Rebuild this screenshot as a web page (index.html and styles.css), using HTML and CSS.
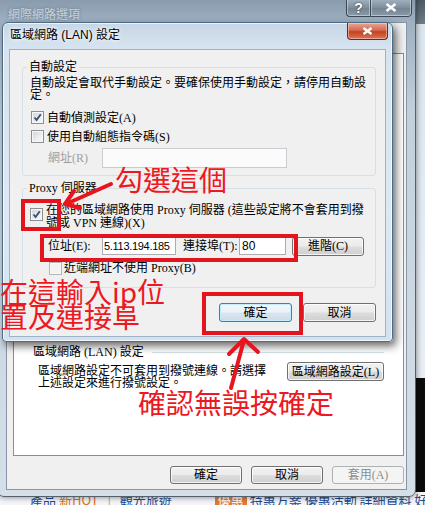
FILE: index.html
```html
<!DOCTYPE html>
<html lang="zh-Hant">
<head>
    <meta charset="UTF-8">
    <meta name="viewport" content="width=device-width, initial-scale=1.0">
    <title>區域網路 (LAN) 設定</title>
    <link rel="stylesheet" href="styles.css">
</head>
<body>
    <div class="backdrop">
        <span>產品</span> <span class="hot">新HOT</span> <span class="sep">|</span> <span>觀光旅遊</span>
        <span class="tag">優惠</span> <span>特惠方案 優惠活動 詳細資料 好禮</span>
    </div>

    <div class="window outer">
        <div class="titlebar">
            <span class="title">網際網路選項</span>
            <div class="caption-btns">
                <span class="cap-btn help">?</span>
                <span class="cap-btn close">
                    <svg width="12" height="9" viewBox="0 0 12 9"><path d="M1.5 1 L10.5 8 M10.5 1 L1.5 8"/></svg>
                </span>
            </div>
        </div>
        <div class="client">
            <div class="tab-panel">
                <div class="lan-section">
                    <div class="section-head">
                        <span>區域網路 (LAN) 設定</span>
                        <span class="rule"></span>
                    </div>
                    <div class="section-body">
                        <p>區域網路設定不可套用到撥號連線。請選擇上述設定來進行撥號設定。</p>
                        <button class="btn btn-lan">區域網路設定(L)</button>
                    </div>
                </div>
            </div>
            <div class="btn-row">
                <button class="btn">確定</button>
                <button class="btn">取消</button>
                <button class="btn" disabled>套用(A)</button>
            </div>
        </div>
    </div>

    <div class="window lan-dialog">
        <div class="titlebar">
            <span class="title">區域網路 (LAN) 設定</span>
            <span class="close-btn">
                <svg width="11" height="8" viewBox="0 0 11 8"><path d="M1.5 1 L9.5 7 M9.5 1 L1.5 7"/></svg>
            </span>
        </div>
        <div class="client">
            <fieldset class="group">
                <legend>自動設定</legend>
                <p class="desc">自動設定會取代手動設定。要確保使用手動設定，請停用自動設定。</p>
                <div class="check first">
                    <span class="cb"><svg width="9" height="9" viewBox="0 0 9 9"><path d="M1.5 4.5 L3.6 7 L7.8 1.2"/></svg></span>
                    <span>自動偵測設定(A)</span>
                </div>
                <div class="check">
                    <span class="cb"></span>
                    <span>使用自動組態指令碼(S)</span>
                </div>
                <div class="field-row url-row">
                    <span class="field-label disabled">網址(R)</span>
                    <input class="textbox url" type="text" disabled>
                </div>
            </fieldset>

            <fieldset class="group proxy">
                <legend>Proxy 伺服器</legend>
                <div class="check multi">
                    <span class="cb"><svg width="9" height="9" viewBox="0 0 9 9"><path d="M1.5 4.5 L3.6 7 L7.8 1.2"/></svg></span>
                    <span class="multi-text">在您的區域網路使用 Proxy 伺服器 (這些設定將不會套用到撥號或 VPN 連線)(X)</span>
                </div>
                <div class="field-row addr-row">
                    <span class="field-label">位址(E):</span>
                    <input class="textbox addr" type="text" value="5.113.194.185">
                    <span class="field-label port-label">連接埠(T):</span>
                    <input class="textbox port" type="text" value="80">
                    <button class="btn btn-adv">進階(C)</button>
                </div>
                <div class="check bypass">
                    <span class="cb off"></span>
                    <span>近端網址不使用 Proxy(B)</span>
                </div>
            </fieldset>

            <div class="dialog-btns">
                <button class="btn default">確定</button>
                <button class="btn">取消</button>
            </div>
        </div>
    </div>

    <div class="notes">
        <div class="mark mark-check"></div>
        <div class="mark mark-addr"></div>
        <div class="mark mark-ok"></div>
        <svg class="arrows" width="425" height="505" viewBox="0 0 425 505">
            <path d="M111 184 L66 204 M80 208 L65 204 L74 191"/>
            <path d="M231 388 L244 340 M229 354 L244 339 L258 352"/>
        </svg>
        <div class="note note-check">勾選這個</div>
        <div class="note note-ip">在這輸入ip位<br>置及連接阜</div>
        <div class="note note-ok">確認無誤按確定</div>
    </div>
</body>
</html>
```

FILE: styles.css
```css
* {
    box-sizing: border-box;
}

body {
    margin: 0;
    width: 425px;
    height: 505px;
    overflow: hidden;
    position: relative;
    font: 12px/14px "Liberation Serif", "Noto Sans CJK TC", serif;
    color: #000;
    background: linear-gradient(to bottom, #4e5b68 0, #6d7d8b 24px, #dce6ef 24px, #e9eff5 378px, #0c0c0c 378px, #0c0c0c 492px, #f4f6f9 492px);
}

/* page behind the windows */
.backdrop {
    padding: 492px 0 0 30px;
    white-space: nowrap;
    font: 13px/16px "Noto Sans CJK TC", sans-serif;
    color: #1b4a94;
}

.backdrop .hot {
    color: #e0701c;
}

.backdrop .sep {
    color: #9aa6b2;
    margin: 0 6px;
}

.backdrop .tag {
    margin-left: 40px;
    padding: 0 3px;
    background: #e07a3a;
    color: #fff;
}

/* windows */
.window {
    position: absolute;
    display: flex;
    flex-direction: column;
}

.outer {
    left: -3px;
    top: -8px;
    width: 419px;
    height: 505px;
    padding: 0 8px 6px;
    border: 1px solid #55626e;
    border-radius: 7px;
    background: linear-gradient(to bottom, #8295a7 0, #9fb1c2 30px, #c3d0dc 120px, #d5dfe8 100%);
    box-shadow: 0 0 6px rgba(0, 0, 0, 0.5);
}

.outer .titlebar {
    display: flex;
    justify-content: space-between;
    align-items: flex-start;
    height: 29px;
    margin: 0 -5px 0 -6px;
    padding-left: 8px;
}

.outer .title {
    margin-top: 14px;
    font: 12px/14px "Noto Sans CJK TC", sans-serif;
    color: #c9d2da;
    text-shadow: 0 0 3px rgba(60, 75, 90, 0.6);
}

.caption-btns {
    display: flex;
    margin-top: 5px;
}

.cap-btn {
    display: flex;
    align-items: center;
    justify-content: center;
    height: 19px;
    border: 1px solid #3c4853;
    box-shadow: inset 0 0 0 1px rgba(255, 255, 255, 0.4);
    background: linear-gradient(to bottom, #a4b3c0, #7e8f9e 50%, #72838f 51%, #8b9aa7);
    color: #fff;
    font: bold 14px/14px "Liberation Sans", sans-serif;
    text-shadow: 0 0 2px #222;
}

.cap-btn.help {
    width: 24px;
    border-radius: 0 0 0 4px;
    border-right: none;
}

.cap-btn.close {
    width: 42px;
    border-radius: 0 0 4px 0;
}

.cap-btn svg path {
    stroke: #fff;
    stroke-width: 2.6;
    fill: none;
}

.outer .client {
    flex: 1;
    display: flex;
    flex-direction: column;
    padding: 30px 2px 5px 6px;
    border: 1px solid #8696a6;
    background: #f0f0f0;
}

.tab-panel {
    flex: 1;
    display: flex;
    flex-direction: column;
    justify-content: flex-end;
    border: 1px solid #898c95;
    background: #fff;
}

.lan-section {
    padding: 0 19px 66px 19px;
}

.section-head {
    display: flex;
    align-items: center;
    height: 14px;
}

.rule {
    flex: 1;
    margin-left: 8px;
    border-top: 1px solid #d5dfe5;
}

.section-body {
    display: flex;
    justify-content: space-between;
    align-items: flex-start;
    margin-top: 3px;
}

.section-body p {
    width: 232px;
    margin: 3px 0 0 5px;
    line-height: 12px;
}

.btn-row {
    display: flex;
    justify-content: flex-end;
    gap: 9px;
    margin-top: 10px;
}

.btn-row .btn {
    width: 72px;
    height: 18px;
}

/* buttons */
.btn {
    padding: 0;
    font: 12px/14px "Liberation Serif", "Noto Sans CJK TC", serif;
    color: #000;
    border: 1px solid #707070;
    border-radius: 3px;
    background: linear-gradient(to bottom, #f2f2f2 0, #ebebeb 48%, #dddddd 52%, #cfcfcf 100%);
    box-shadow: inset 0 0 0 1px rgba(255, 255, 255, 0.75);
}

.btn:disabled {
    color: #8d8d8d;
    border-color: #adb2b5;
    background: #f4f4f4;
    box-shadow: none;
}

.btn.default {
    border-color: #3c7fb1;
    box-shadow: inset 0 0 0 1px #c4ecfc;
    background: linear-gradient(to bottom, #f4f8fb 0, #e9f2f8 48%, #dae6ef 52%, #cedbe5 100%);
}

.btn-lan {
    width: 97px;
    height: 19px;
}

/* LAN settings dialog */
.lan-dialog {
    left: 2px;
    top: 22px;
    width: 391px;
    height: 320px;
    padding: 0 6px 4px;
    border: 1px solid #4f6a84;
    border-radius: 6px 6px 4px 4px;
    background: linear-gradient(to bottom, #c6d6e5 0, #d7e4f0 26px, #dce8f4 60%, #d3e2f0 100%);
    box-shadow: 3px 4px 8px rgba(0, 0, 0, 0.6), inset 0 0 0 1px rgba(255, 255, 255, 0.7);
}

.lan-dialog .titlebar {
    display: flex;
    justify-content: space-between;
    align-items: flex-start;
    height: 26px;
    margin: 0 -2px 0 -6px;
    padding-left: 7px;
}

.lan-dialog .title {
    margin-top: 5px;
    font: 12px/14px "Liberation Sans", "Noto Sans CJK TC", sans-serif;
    text-shadow: 0 0 6px #fff, 0 0 3px #fff;
}

.close-btn {
    display: flex;
    align-items: center;
    justify-content: center;
    width: 41px;
    height: 17px;
    border: 1px solid #6b2a1e;
    border-top: none;
    border-radius: 0 0 4px 4px;
    background: linear-gradient(to bottom, #e7a894 0, #d66a51 45%, #c4421f 55%, #d8775a 100%);
    box-shadow: inset 0 0 0 1px rgba(255, 220, 210, 0.5);
}

.close-btn svg path {
    stroke: #fff;
    stroke-width: 2.4;
    fill: none;
}

.lan-dialog .client {
    flex: 1;
    padding: 11px 9px 0 12px;
    border: 1px solid #9fb3c6;
    background: #f0f0f0;
}

.group {
    margin: 0;
    min-width: 0;
    padding: 4px 7px 7px;
    border: 1px solid #d5dfe5;
    border-radius: 3px;
}

.group legend {
    margin-left: -3px;
    padding: 0 2px;
    line-height: 12px;
}

.group.proxy {
    margin-top: 6px;
    padding-top: 10px;
    padding-bottom: 10px;
}

.desc {
    margin: 0;
    line-height: 12px;
}

.check {
    display: flex;
    align-items: center;
    gap: 3px;
    height: 19px;
    padding-left: 1px;
}

.check.first {
    margin-top: 7px;
}

.check.multi {
    align-items: flex-start;
    height: auto;
    padding-left: 0;
    line-height: 13px;
}

.check.multi .cb {
    margin-top: 4px;
}

.multi-text {
    flex: 1;
}

.check.bypass {
    height: 18px;
    margin-top: 3px;
    padding-left: 19px;
    gap: 2px;
}

.cb {
    flex: none;
    display: flex;
    align-items: center;
    justify-content: center;
    width: 13px;
    height: 13px;
    border: 1px solid #8e8f8f;
    background: linear-gradient(135deg, #cfd3d8 0, #eceef0 60%, #fbfbfb 100%);
    box-shadow: inset 0 0 0 1px #f7f7f7;
}

.cb.off {
    border-color: #b6b6b6;
    background: #f2f2f2;
}

.cb svg path {
    stroke: #3d4f78;
    stroke-width: 1.9;
    fill: none;
}

.field-row {
    display: flex;
    align-items: center;
    height: 20px;
    padding-left: 18px;
}

.url-row {
    margin-top: 2px;
}

.addr-row {
    margin-top: 6px;
}

.field-label {
    width: 54px;
}

.field-label.disabled {
    color: #a0a0a0;
}

.port-label {
    width: 56px;
    margin-left: 7px;
}

.textbox {
    height: 18px;
    margin: 0;
    padding: 0 1px;
    border: 1px solid #abadb3;
    border-top-color: #8e9298;
    background: #fff;
    font: 11px/14px "Liberation Sans", sans-serif;
    letter-spacing: -0.3px;
    color: #000;
}

.textbox.url {
    width: 185px;
    height: 20px;
    border-color: #c9cdd2;
    background: #fbfbfb;
}

.textbox.addr {
    width: 74px;
}

.textbox.port {
    width: 47px;
    padding-left: 2px;
    font-size: 12px;
    letter-spacing: 0;
}

.btn-adv {
    width: 72px;
    height: 19px;
    margin-left: 6px;
}

.dialog-btns {
    display: flex;
    justify-content: flex-end;
    gap: 11px;
    margin-top: 15px;
}

.dialog-btns .btn {
    width: 73px;
    height: 19px;
}

/* red annotations drawn over the screenshot */
.notes {
    position: absolute;
    inset: 0;
    pointer-events: none;
}

.mark {
    position: absolute;
    border: 4px solid #e3141d;
}

.mark-check {
    left: 21px;
    top: 199px;
    width: 40px;
    height: 32px;
}

.mark-addr {
    left: 40px;
    top: 234px;
    width: 258px;
    height: 28px;
}

.mark-ok {
    left: 202px;
    top: 292px;
    width: 101px;
    height: 43px;
}

.arrows {
    position: absolute;
    left: 0;
    top: 0;
}

.arrows path {
    stroke: #e8141e;
    stroke-width: 4;
    stroke-linecap: round;
    stroke-linejoin: round;
    fill: none;
}

.note {
    position: absolute;
    white-space: nowrap;
    color: #ec1822;
    font: 28px/26px "Noto Sans CJK TC", sans-serif;
}

.note-check {
    left: 115px;
    top: 166px;
}

.note-ip {
    left: 0;
    top: 279px;
    line-height: 25px;
}

.note-ok {
    left: 138px;
    top: 389px;
}
```
